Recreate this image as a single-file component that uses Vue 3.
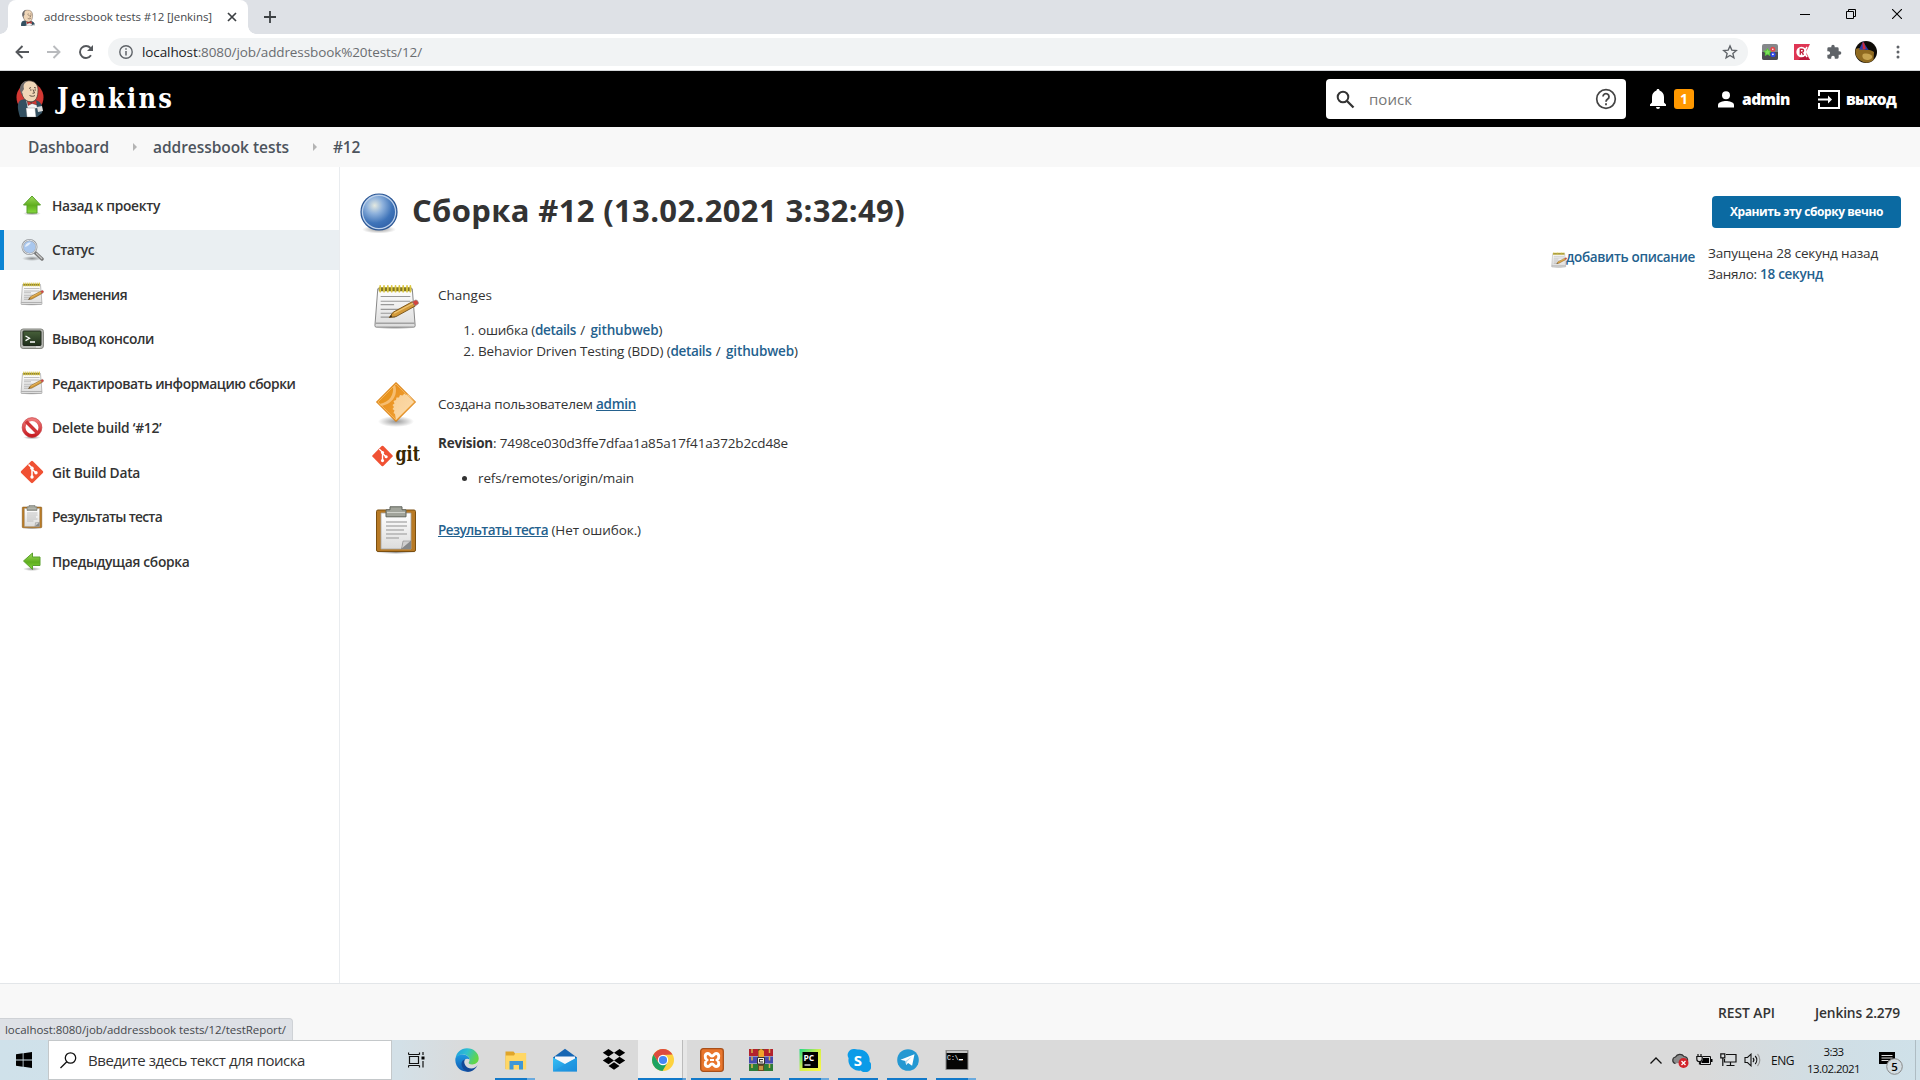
<script setup>
// Tracks a piece of text out to the given width in pixels.
const fit = (el, { value }) => {
  el.style.letterSpacing = '0px'
  const n = el.textContent.length
  el.style.letterSpacing = ((value - el.getBoundingClientRect().width) / n).toFixed(3) + 'px'
}
const vFit = { mounted: fit }

const tasks = [
  { icon: 'up', text: 'Назад к проекту', w: 108 },
  { icon: 'search', text: 'Статус', w: 42, active: true },
  { icon: 'notepad', text: 'Изменения', w: 75 },
  { icon: 'terminal', text: 'Вывод консоли', w: 102 },
  { icon: 'notepad', text: 'Редактировать информацию сборки', w: 243.5 },
  { icon: 'stop', text: 'Delete build ‘#12’', w: 109.5 },
  { icon: 'git', text: 'Git Build Data', w: 88 },
  { icon: 'clipboard', text: 'Результаты теста', w: 110 },
  { icon: 'left', text: 'Предыдущая сборка', w: 137.5 }
]
const commits = [
  { text: 'ошибка (', w: 57 },
  { text: 'Behavior Driven Testing (BDD) (', w: 192.5 }
]
const apps = [
  { icon: 'edge' },
  { icon: 'explorer', run: 'multi' },
  { icon: 'mail' },
  { icon: 'dropbox' },
  { icon: 'chrome', run: 'current' },
  { icon: 'xampp', run: 'one' },
  { icon: 'winrar', run: 'one' },
  { icon: 'pycharm', run: 'multi', label: 'PC' },
  { icon: 'skype', run: 'one', label: 'S' },
  { icon: 'telegram', run: 'one' },
  { icon: 'cmd', run: 'multi', label: 'C:\\_' }
]
</script>

<template>
  <div class="screen">
    <svg class="defs" width="0" height="0" aria-hidden="true">
      <defs>
        <linearGradient id="gGreen" x1="0" y1="0" x2="0" y2="1"><stop offset="0" stop-color="#9fdc5c" /><stop offset=".55" stop-color="#5fae1e" /><stop offset="1" stop-color="#86d93c" /></linearGradient>
        <linearGradient id="gPaper" x1="0" y1="0" x2="0" y2="1"><stop offset="0" stop-color="#fff" /><stop offset="1" stop-color="#dcdcdc" /></linearGradient>
        <radialGradient id="gBall" cx=".38" cy=".32" r=".75"><stop offset="0" stop-color="#e4e9e0" /><stop offset=".3" stop-color="#8fb2dc" /><stop offset=".65" stop-color="#3f74b9" /><stop offset="1" stop-color="#2c5ca4" /></radialGradient>
        <linearGradient id="gOrange" x1="0" y1="0" x2="1" y2="1"><stop offset="0" stop-color="#e58a17" /><stop offset="1" stop-color="#f3a53a" /></linearGradient>
        <linearGradient id="gCog" x1="0" y1="0" x2="1" y2="1"><stop offset="0" stop-color="#f9cf94" /><stop offset="1" stop-color="#fbdcae" /></linearGradient>
        <linearGradient id="gRed" x1="0" y1="0" x2="0" y2="1"><stop offset="0" stop-color="#ee7b7b" /><stop offset="1" stop-color="#c81d22" /></linearGradient>
        <linearGradient id="gTerm" x1="0" y1="0" x2="0" y2="1"><stop offset="0" stop-color="#47603a" /><stop offset="1" stop-color="#1f2f1b" /></linearGradient>
        <linearGradient id="gEdgeA" x1="0" y1="0" x2="1" y2=".4"><stop offset="0" stop-color="#1c9be0" /><stop offset=".5" stop-color="#2fc0d0" /><stop offset="1" stop-color="#62d648" /></linearGradient>
        <linearGradient id="gEdgeB" x1="0" y1="0" x2="0" y2="1"><stop offset="0" stop-color="#1d9ae2" /><stop offset="1" stop-color="#1259b0" /></linearGradient>
        <linearGradient id="gMail" x1="0" y1="0" x2="1" y2="1"><stop offset="0" stop-color="#35c0f5" /><stop offset="1" stop-color="#1a86d8" /></linearGradient>
        <linearGradient id="gPc" x1="0" y1="0" x2="1" y2="1"><stop offset="0" stop-color="#21d789" /><stop offset=".5" stop-color="#d5f04a" /><stop offset="1" stop-color="#fcf84a" /></linearGradient>
        <radialGradient id="gShadow"><stop offset="0" stop-color="#000" stop-opacity=".4" /><stop offset="1" stop-color="#000" stop-opacity="0" /></radialGradient>
      </defs>

      <symbol id="i-up" viewBox="0 0 24 24"><ellipse cx="12" cy="20.500" rx="9" ry="2" fill="url(#gShadow)" /><path d="M12 3l8.500 9H17v8H7v-8H3.500z" fill="url(#gGreen)" stroke="#5aa02c" stroke-linejoin="round" /></symbol>
      <symbol id="i-left" viewBox="0 0 24 24"><ellipse cx="12" cy="20" rx="9" ry="2" fill="url(#gShadow)" /><path d="M3.500 12l9-8v4H20v8.500h-7.500v4z" fill="url(#gGreen)" stroke="#5aa02c" stroke-linejoin="round" /></symbol>
      <symbol id="i-search" viewBox="0 0 24 24"><ellipse cx="12" cy="20.500" rx="10" ry="2.500" fill="url(#gShadow)" /><path d="M15 14.500l7 6.500" stroke="#777" stroke-width="3.400" stroke-linecap="round" /><path d="M16.500 15.500l5.200 5" stroke="#c9c9c9" stroke-width="1.200" stroke-linecap="round" /><circle cx="9.500" cy="9" r="7" fill="#a9c7ee" stroke="#979a9e" stroke-width="2" /><circle cx="9.500" cy="9" r="6.800" fill="none" stroke="#dfe2e6" /><path d="M5 9a5 5 0 0 1 6-4.500C9.500 7 8 8 5 9z" fill="#e4eefb" /></symbol>
      <symbol id="i-notepad" viewBox="0 0 48 48"><ellipse cx="23" cy="45" rx="22" ry="2.500" fill="url(#gShadow)" /><path d="M5 5h36l3 38.500a1.500 1.500 0 0 1-1.500 1.500h-39A1.500 1.500 0 0 1 2 43.500z" fill="url(#gPaper)" stroke="#838383" /><path d="M2.500 41h41" stroke="#a2a2a2" stroke-width="1.500" /><path d="M6 3.500h34v4H6z" fill="#7f7426" /><path d="M7.500 2v6M11.500 2v6M15.500 2v6M19.500 2v6M23.500 2v6M27.500 2v6M31.500 2v6M35.500 2v6M39 2v6" stroke="#dcc840" stroke-width="1.800" stroke-linecap="round" /><path d="M8 13h31M8 18h31M8 21.500h14M8 26.500h25M8 30.500h18M8 34.500h15" stroke="#999" stroke-width="1.200" /><path d="M17 35l4-5.500L41 18.500l3 4.500-20 11z" fill="#d39a3a" stroke="#7a5518" /><path d="M22 30.500L42 20" stroke="#f0c877" stroke-width="1.200" /><path d="M41 18.500l3.500-1.800c2 0 3.500 2.500 2.800 4L44 23z" fill="#d4453d" stroke="#8c8c8c" stroke-width=".7" /><path d="M17 35l2-2.600 1 1.500z" fill="#222" /></symbol>
      <symbol id="i-terminal" viewBox="0 0 24 24"><rect x=".6" y="2" width="22.800" height="19.500" rx="2.500" fill="#b9bbb6" stroke="#83857f" /><rect x="3" y="4" width="18" height="14.500" rx=".8" fill="url(#gTerm)" stroke="#20281d" /><path d="M5.500 9l4 2.300-4 2.300M10 15h5" fill="none" stroke="#fff" stroke-width="1.300" /><path d="M16 20h4" stroke="#eee" /></symbol>
      <symbol id="i-stop" viewBox="0 0 24 24"><ellipse cx="12" cy="21.500" rx="9" ry="1.800" fill="url(#gShadow)" /><circle cx="12" cy="11.500" r="8.200" fill="#fff" stroke="url(#gRed)" stroke-width="3.400" /><path d="M6 5.500l12 12" stroke="#cf3437" stroke-width="3.400" /><circle cx="12" cy="11.500" r="9.900" fill="none" stroke="#c03338" stroke-width=".6" /></symbol>
      <symbol id="i-git" viewBox="0 0 24 24"><rect x="3.700" y="3.700" width="16.600" height="16.600" rx="1.300" transform="rotate(45 12 12)" fill="#f05133" /><path d="M8.500 4.500L12 8v9.500M12 9l4 4" fill="none" stroke="#fff" stroke-width="1.500" /><circle cx="12" cy="8.200" r="1.700" fill="#fff" /><circle cx="12" cy="17" r="1.700" fill="#fff" /><circle cx="16" cy="12.800" r="1.700" fill="#fff" /></symbol>
      <symbol id="i-clipboard" viewBox="0 0 48 48"><ellipse cx="24" cy="46.500" rx="20" ry="1.500" fill="url(#gShadow)" /><rect x="4.500" y="4" width="39" height="41.500" rx="1.500" fill="#b87a25" stroke="#7b4f10" /><path d="M9 7h30v36H9z" fill="url(#gPaper)" stroke="#a5a5a5" stroke-width=".8" /><path d="M39 35v8H29.500l1.500-7z" fill="#85888a" /><path d="M31 35h8l-9.500 8z" fill="#cfcfcf" stroke="#777" stroke-width=".5" /><path d="M18 .8h12v3h4v7H14v-7h4z" fill="#a1a49b" stroke="#60645c" /><path d="M15 6.500h18" stroke="#d0d2cb" /><path d="M14 16h21M14 20h21M14 24h18M14 28h21M14 32h13" stroke="#b3b3b3" stroke-width="1.600" /></symbol>
      <symbol id="i-ball" viewBox="0 0 40 42"><ellipse cx="20" cy="37.500" rx="17" ry="4" fill="url(#gShadow)" /><circle cx="20" cy="20" r="18" fill="url(#gBall)" stroke="#2d5794" stroke-width="1.200" /><circle cx="20" cy="20" r="16.600" fill="none" stroke="#bdd1ea" stroke-width="1.200" /></symbol>
      <symbol id="i-user" viewBox="0 0 48 48"><ellipse cx="24" cy="41.500" rx="18" ry="5.500" fill="url(#gShadow)" /><path d="M24 2.500L43.500 22 24 41.500 4.500 22z" fill="url(#gOrange)" stroke="#d77b0b" stroke-linejoin="round" /><path d="M23 5c3 8-1 19-14 21L5.500 22z" fill="#f6bd70" /><path d="M21 6.500c1 8-3 15.500-13.500 17.500L5.500 22z" fill="#e8941e" /><path d="M36 14.500l-2 .5-1.500-1.500-2 2-2.500-.5-1 2.500-2.500 0-.5 2.500-2.500 1 1 2.500-2 1.500 1.500 2-1.500 2 2 1.500-1 2.500 1.500 1 .5 3L24 40l18.500-18z" fill="url(#gCog)" /><path d="M24 4L42 22 24 40 6 22z" fill="none" stroke="#f8bb63" stroke-width=".8" /></symbol>

      <symbol id="i-butler" viewBox="0 0 28 38"><path d="M4 37C1 28 1 22 5 20l8-2 9 3c4 2 5 7 4 12l-5 4z" fill="#335061" /><path d="M10 19l5 5 5-4 1 8-9 2z" fill="#f3f3f3" /><path d="M11 20l4 2.500 5-2.500 1 5-5-1.500-4 2z" fill="#d33833" stroke="#222" stroke-width=".4" /><path d="M5 10C4 4 8 .8 13 .8c6 0 9 4 9 9 0 7-2 12-7 12-6 0-9-5-10-12z" fill="#f0d6b7" stroke="#463b35" stroke-width=".7" /><path d="M5 13C2 7 6 1 12 1 8 3 7 5 8 9l-2 3 1 4z" fill="#6d6b6d" /><path d="M13 8.500l2-1M18 7.500l2 .5M14 10h1.500M18.500 10H20M17 9.500l1.500 3.500-2 .3M13.500 15.500c2 1 4 1 5.500 0" fill="none" stroke="#3b2c25" stroke-width=".8" /><path d="M10 28l9 0 1 9h-9z" fill="#fff" stroke="#555" stroke-width=".3" /><path d="M21 27l5-1 1 5-5 1z" fill="#ddd" /></symbol>

      <symbol id="i-edge" viewBox="0 0 24 24"><path d="M.5 11C1 4.500 6 .3 12 .3c7 0 11.700 5 11.700 10 0 4-3 6.200-6.500 6.200-3 0-4-1.200-3.400-2.200.7-1.200.8-2 .8-2.800C14.400 8 11 6.500 8 6.500 4.500 6.500 1.500 8.500.5 11z" fill="url(#gEdgeA)" /><path d="M.3 12C.3 8.500 4 6.300 8 6.500c3.500.2 6.500 2.500 6.600 5-3-2-6 0-6 3.500 0 4.500 5 8.500 9 7.600C12 25.500.5 23 .3 12z" fill="url(#gEdgeB)" /><path d="M9.800 11.500c-2 4 1.500 9 6.500 9 3 0 5-1.500 6.200-3.200-2 4-5.500 6.300-9 6.400-4-.5-7.500-5-7-8.500.3-1.800 1.600-3.200 3.300-3.700z" fill="#134a98" /></symbol>
      <symbol id="i-explorer" viewBox="0 0 24 24"><path d="M1.500 3.500h8l2 2.500H22v15H1.500z" fill="#e0a52a" /><path d="M1.500 7.500H10l1.500-2.500h10.700v16.500H1.500z" fill="#ffd765" /><path d="M5.500 13h13.500v8.500h-4V17H9.500v4.500h-4z" fill="#3f97d6" /></symbol>
      <symbol id="i-mail" viewBox="0 0 24 24"><path d="M0 9.500L12 .8l12 8.700v3H0z" fill="#1565b3" /><path d="M2 8.500h20V16H2z" fill="#f5f7fa" /><path d="M0 9.500l12 6.500 12-6.500v14H0z" fill="url(#gMail)" /><path d="M0 23.500l14-8.500L24 9.500v14z" fill="#1c93e0" opacity=".5" /></symbol>
      <symbol id="i-dropbox" viewBox="0 0 24 24"><path d="M6.500 1l5.500 3.700-5.500 3.700L.8 4.700zM17.500 1l5.700 3.700-5.700 3.700L12 4.700zM6.500 8.800L12 12.500l-5.500 3.700-5.700-3.700zM17.500 8.800l5.700 3.700-5.700 3.700-5.500-3.700zM12 14.200l5.500 3.700-5.500 3.800-5.500-3.800z" /></symbol>
      <symbol id="i-chrome" viewBox="0 0 24 24"><circle cx="12" cy="12" r="11" fill="#fdd23f" /><path d="M2.500 6.500A11 11 0 0 1 21.500 6.500L12 7l-5 7z" fill="#dd4b3e" /><path d="M2.500 6.500A11 11 0 0 0 11.500 23l5-8.500L12 16l-5-2z" fill="#1da362" /><circle cx="12" cy="12" r="5.200" fill="#fff" /><circle cx="12" cy="12" r="4.100" fill="#4687f4" /></symbol>
      <symbol id="i-xampp" viewBox="0 0 24 24"><rect x=".7" y=".7" width="22.600" height="22.600" rx="2.500" fill="#e8762d" stroke="#a94f18" stroke-width="1.300" /><path d="M8 5.500c-3.500 0-3.500 4.500-1.200 6.500-2.300 2-2.300 6.500 1.200 6.500 2 0 1.800-2.500 4-2.500s2 2.500 4 2.500c3.500 0 3.500-4.500 1.200-6.500 2.300-2 2.300-6.500-1.200-6.500-2 0-1.800 2.500-4 2.500s-2-2.500-4-2.500z" fill="none" stroke="#fff" stroke-width="2.900" /><path d="M10 12h4" stroke="#fff" stroke-width="2" /></symbol>
      <symbol id="i-winrar" viewBox="0 0 24 24"><path d="M0 1h24v7H0z" fill="#b3222d" /><path d="M0 8.500h24v7H0z" fill="#454bb0" /><path d="M0 16h24v7H0z" fill="#2c7c38" /><path d="M3 1v22M20.500 1v22" stroke="#d7b24c" stroke-width="1.500" stroke-dasharray="4 3.500" /><path d="M9 1h6v22H9z" fill="#6b4a22" /><path d="M9.500 3L12 .8 15 3v6H9.500z" fill="#f0a52c" /><path d="M8.500 9.500h7V16h-7z" fill="#f3ede0" stroke="#333" /><path d="M10.500 11.500h3.500M10.500 14h3.500M10.500 11v3" stroke="#333" /><path d="M10 18h4v4h-4z" fill="#c89344" /></symbol>
      <symbol id="i-pycharm" viewBox="0 0 24 24"><rect x="1.500" y="1" width="21.500" height="22" fill="url(#gPc)" /><rect x="4.500" y="4" width="15.500" height="16" /><path d="M6.500 17h6" stroke="#fff" stroke-width="1.200" /></symbol>
      <symbol id="i-skype" viewBox="0 0 24 24"><path d="M7 1a6 6 0 0 1 3.500.6 10.500 10.500 0 0 1 12 12A6 6 0 0 1 13.800 22.500 10.500 10.500 0 0 1 1.600 10.200 6 6 0 0 1 7 1z" fill="#0b9be8" /></symbol>
      <symbol id="i-telegram" viewBox="0 0 24 24"><circle cx="12" cy="12" r="10.800" fill="#2498d2" /><path d="M4.500 11.800L18.500 6.300l-2.400 11.500-4-2.800-2 2-.6-4z" fill="#fff" /><path d="M9.500 13l6.500-4.600-5 5.300-.9 3.300z" fill="#b6d9ea" /></symbol>
      <symbol id="i-cmd" viewBox="0 0 24 24"><rect x="1" y="2.500" width="22" height="19" fill="#050505" stroke="#8a8a8a" /><path d="M1.500 4h21" stroke="#d8d8d8" stroke-width="1.800" /><path d="M14 11.500h4" stroke="#fff" /></symbol>
    </svg>

    <!-- Browser -->
    <header class="tabs">
      <div class="tab">
        <svg class="favicon" viewBox="0 0 28 28" width="16" height="17"><use href="#i-butler" width="28" height="38" /></svg>
        <span v-fit="168" class="tab-title">addressbook tests #12 [Jenkins]</span>
        <svg class="tab-close" width="10" height="10" viewBox="0 0 10 10"><path d="M1 1l8 8M9 1L1 9" stroke="#3c4043" stroke-width="1.700" /></svg>
      </div>
      <svg class="new-tab" width="12" height="12" viewBox="0 0 12 12"><path d="M6 0v12M0 6h12" stroke="#3c4043" stroke-width="1.800" /></svg>
      <div class="win">
        <svg width="10" height="10" viewBox="0 0 10 10"><path d="M0 5.500h10" stroke="#000" /></svg>
        <svg width="10" height="10" viewBox="0 0 10 10"><path d="M.5 2.500h7v7h-7zM2.500 2.500v-2h7v7h-2" fill="none" stroke="#000" /></svg>
        <svg width="10" height="10" viewBox="0 0 10 10"><path d="M0 0l10 10M10 0L0 10" stroke="#000" stroke-width="1.100" /></svg>
      </div>
    </header>
    <div class="toolbar">
      <div class="nav">
        <svg width="14" height="14" viewBox="0 0 14 14"><path d="M14 7H1.500M7.500 1L1.500 7l6 6" fill="none" stroke="#55585c" stroke-width="1.900" /></svg>
        <svg width="14" height="14" viewBox="0 0 14 14"><path d="M0 7h12.500M6.500 1l6 6-6 6" fill="none" stroke="#b9bbbe" stroke-width="1.900" /></svg>
        <svg width="14" height="14" viewBox="0 0 14 14"><path d="M12 10.300A6 6 0 1 1 11.500 3" fill="none" stroke="#55585c" stroke-width="1.900" /><path d="M14 0v6H8z" fill="#55585c" /></svg>
      </div>
      <div class="omnibox">
        <svg width="14" height="14" viewBox="0 0 14 14"><circle cx="7" cy="7" r="6.200" fill="none" stroke="#5f6368" stroke-width="1.400" /><path d="M7 6v4.500M7 3.300v1.500" stroke="#5f6368" stroke-width="1.500" /></svg>
        <span v-fit="280" class="url"><b>localhost</b>:8080/job/addressbook%20tests/12/</span>
        <svg class="star" width="16" height="16" viewBox="0 0 24 24"><path d="M12 2.800l2.700 6.300 6.800.6-5.200 4.500 1.600 6.700L12 17.300l-5.900 3.600 1.600-6.700-5.200-4.500 6.800-.6z" fill="none" stroke="#5f6368" stroke-width="2" /></svg>
      </div>
      <div class="exts">
        <svg width="16" height="16" viewBox="0 0 16 16"><rect width="16" height="16" rx="2" fill="#85888b" /><path d="M0 8h16v6a2 2 0 0 1-2 2H2a2 2 0 0 1-2-2z" fill="#4a4c50" /><path d="M5.500 4.500l1.200 2.300 2.500.4-1.800 1.700.4 2.500-2.300-1.200-2.300 1.200.4-2.500-1.800-1.700 2.500-.4z" fill="#7be05a" stroke="#58c83c" /><circle cx="10.800" cy="5.200" r="2.500" fill="#e2484a" /><circle cx="11" cy="10.500" r="2.600" fill="#2f49e8" /><circle cx="10.900" cy="10.300" r=".9" fill="#fff" /><circle cx="10.800" cy="5.300" r=".8" fill="#fff" /></svg>
        <svg width="16" height="16" viewBox="0 0 16 16"><path d="M0 0h16l-4 8 4 8H0z" fill="#df3654" /><path d="M11 10l5 6H4z" fill="#b8183a" /><circle cx="7.500" cy="8" r="5.200" fill="#fff" /><path d="M13 3l-3 5 3 5" fill="none" stroke="#fff" stroke-width="1.500" /><path d="M6.300 10.800V5.300h1.800a1.300 1.300 0 0 1 0 2.900H6.300M7.900 8.200l1.500 2.600" fill="none" stroke="#c01f3c" stroke-width="1.400" /></svg>
        <svg width="16" height="16" viewBox="0 0 24 24"><path d="M20.500 11H19V7a2 2 0 0 0-2-2h-4V3.500a2.500 2.500 0 0 0-5 0V5H4a2 2 0 0 0-2 2v3.800h1.500a2.700 2.700 0 0 1 0 5.400H2V20a2 2 0 0 0 2 2h3.800v-1.500a2.700 2.700 0 0 1 5.400 0V22H17a2 2 0 0 0 2-2v-4h1.500a2.500 2.500 0 0 0 0-5z" fill="#5f6368" /></svg>
        <svg width="22" height="22" viewBox="0 0 22 22"><circle cx="11" cy="11" r="11" fill="#0e0b07" /><path d="M.8 8C4 6 8 7 11 8.500c3 0 6 1 8 2.500l-.5 8A11 11 0 0 1 .8 8z" fill="#8f6a20" /><path d="M8 13c4-1 8 0 9 2s-2 4-5 4-6-3-4-6z" fill="#c6a350" /><path d="M4 8.500L8 .5l5.500 8.500z" fill="#2d3ba8" /><path d="M7.500 1.500l1.500 0 1.800 6.500-3 .5z" fill="#cf2b38" /></svg>
        <svg width="4" height="14" viewBox="0 0 4 14"><circle cx="2" cy="2" r="1.500" fill="#5f6368" /><circle cx="2" cy="7" r="1.500" fill="#5f6368" /><circle cx="2" cy="12" r="1.500" fill="#5f6368" /></svg>
      </div>
    </div>

    <!-- Jenkins -->
    <div class="jhead">
      <a class="brand">
        <svg width="28" height="40" viewBox="0 0 28 40"><ellipse cx="14" cy="18.500" rx="13.500" ry="14.500" fill="#d33833" /><use href="#i-butler" width="28" height="38" y="1" /></svg>
        <span v-fit="117">Jenkins</span>
      </a>
      <div class="find">
        <svg width="19" height="19" viewBox="0 0 19 19"><circle cx="7" cy="7" r="5.300" fill="none" stroke="#333" stroke-width="2" /><path d="M11 11l6.500 6.500" stroke="#333" stroke-width="2.300" /></svg>
        <span v-fit="43" class="ph">поиск</span>
        <svg class="help" width="22" height="22" viewBox="0 0 22 22"><circle cx="11" cy="11" r="9.300" fill="none" stroke="#444" stroke-width="1.700" /><path d="M8 8.600a3 3 0 1 1 4.700 2.500c-1.200.8-1.700 1.300-1.700 2.700M11 15.300v2" fill="none" stroke="#444" stroke-width="1.800" /></svg>
      </div>
      <svg class="bell" width="18" height="20" viewBox="0 0 18 20"><path d="M9 0c1 0 1.500.7 1.500 1.600C13.300 2.400 15 5 15 8v5.500l2 2V17H1v-1.500l2-2V8c0-3 1.700-5.600 4.500-6.400C7.500.7 8 0 9 0zM7 18h4a2 2 0 0 1-4 0z" fill="#fff" /></svg>
      <span class="badge">1</span>
      <svg class="person" width="16" height="17" viewBox="0 0 16 17"><circle cx="8" cy="4.300" r="4" fill="#fff" /><path d="M0 16.500V14c0-3 5-4 8-4s8 1 8 4v2.500z" fill="#fff" /></svg>
      <b v-fit="48" class="who">admin</b>
      <svg class="exit" width="22" height="19" viewBox="0 0 22 19"><path d="M1 6V1h20v17H1v-5" fill="none" stroke="#fff" stroke-width="2" /><path d="M0 9.500h12" stroke="#fff" stroke-width="2" /><path d="M10 5.500l4 4-4 4z" fill="#fff" /></svg>
      <b v-fit="50" class="out">выход</b>
    </div>
    <nav class="crumbs">
      <span v-fit="81">Dashboard</span><i></i><span v-fit="136">addressbook tests</span><i></i><span v-fit="27">#12</span>
    </nav>

    <div class="body">
      <aside>
        <a v-for="(t, k) in tasks" :key="k" class="task" :class="{ active: t.active }">
          <svg width="24" height="24"><use :href="'#i-' + t.icon" width="24" height="24" /></svg>
          <span v-fit="t.w">{{ t.text }}</span>
        </a>
      </aside>
      <main>
        <div class="title">
          <svg width="40" height="42"><use href="#i-ball" width="40" height="42" /></svg>
          <h1 v-fit="493">Сборка #12 (13.02.2021 3:32:49)</h1>
        </div>
        <div class="cols">
          <section>
            <div class="row changes">
              <svg width="48" height="48"><use href="#i-notepad" width="46" height="48" x="1" /></svg>
              <div>
                <span v-fit="54">Changes</span>
                <ol>
                  <li v-for="c in commits" :key="c.text">
                    <span v-fit="c.w" class="pre">{{ c.text }}</span><a v-fit="41">details</a><span v-fit="14.5" class="pre">{{ ' / ' }}</span><a v-fit="68">githubweb</a><span>)</span>
                  </li>
                </ol>
              </div>
            </div>
            <div class="row user">
              <svg width="48" height="48"><use href="#i-user" width="48" height="48" /></svg>
              <div><span v-fit="158" class="pre">Создана пользователем </span><a v-fit="40" class="u">admin</a></div>
            </div>
            <div class="row rev">
              <svg width="48" height="24" viewBox="0 0 48 24"><use href="#i-git" width="22" height="22" x="-.5" y="1" /><text x="23.500" y="17" textLength="24.500" lengthAdjust="spacingAndGlyphs" class="gitword">git</text></svg>
              <div>
                <b v-fit="55">Revision</b><span v-fit="295" class="pre">: 7498ce030d3ffe7dfaa1a85a17f41a372b2cd48e</span>
                <ul><li><span v-fit="156">refs/remotes/origin/main</span></li></ul>
              </div>
            </div>
            <div class="row test">
              <svg width="48" height="48"><use href="#i-clipboard" width="48" height="48" /></svg>
              <div><a v-fit="110" class="u">Результаты теста</a><span v-fit="93" class="pre"> (Нет ошибок.)</span></div>
            </div>
          </section>
          <div class="meta">
            <button><span v-fit="153">Хранить эту сборку вечно</span></button>
            <div class="info">
              <div class="desc"><svg width="16" height="16"><use href="#i-notepad" width="16" height="16" /></svg><a v-fit="129">добавить описание</a></div>
              <div class="when">
                <div><span v-fit="170">Запущена 28 секунд назад</span></div>
                <div><span v-fit="52" class="pre">Заняло: </span><a v-fit="63">18 секунд</a></div>
              </div>
            </div>
          </div>
        </div>
      </main>
    </div>

    <footer>
      <span v-fit="57">REST API</span><span v-fit="85">Jenkins 2.279</span>
      <div class="status"><span v-fit="281">localhost:8080/job/addressbook tests/12/testReport/</span></div>
    </footer>

    <!-- Windows taskbar -->
    <div class="taskbar">
      <div class="start"><svg width="16" height="16" viewBox="0 0 16 16"><path d="M0 2.200L6.700 1.300v6.300H0zM7.500 1.200L16 0v7.600H7.500zM0 8.400h6.700v6.300L0 13.800zM7.500 8.400H16V16l-8.500-1.200z" /></svg></div>
      <div class="wsearch">
        <svg width="17" height="17" viewBox="0 0 17 17"><circle cx="10.500" cy="6" r="5.200" fill="none" stroke="#111" stroke-width="1.300" /><path d="M6.800 9.700L.5 16" stroke="#111" stroke-width="1.300" /></svg>
        <span v-fit="217">Введите здесь текст для поиска</span>
      </div>
      <div class="view"><svg width="17" height="16" viewBox="0 0 17 16"><path d="M1.500 4.500h9v7h-9zM.5 2.500V.500M11.500 2.500V.500M.5 2.500h11M.5 15.500v-2M11.500 15.500v-2M.5 13.500h11M15 0v3M15 9v6.500" fill="none" stroke="#111" stroke-width="1.200" /><path d="M13.500 4.500h3v3h-3z" /></svg></div>
      <div v-for="a in apps" :key="a.icon" class="app" :class="a.run">
        <svg width="24" height="24"><use :href="'#i-' + a.icon" width="24" height="24" /></svg>
        <span v-if="a.label" class="label" :class="a.icon">{{ a.label }}</span>
      </div>
      <div class="tray">
        <svg width="12" height="7" viewBox="0 0 12 7"><path d="M.5 6.500L6 1l5.500 5.500" fill="none" stroke="#111" stroke-width="1.300" /></svg>
        <svg width="17" height="15" viewBox="0 0 17 15"><path d="M3.500 10.500a3.300 3.300 0 0 1 0-6.500A5 5 0 0 1 12 3.500c3 .3 4 2 3.500 5" fill="#8a8a8a" stroke="#333" stroke-width="1.200" /><circle cx="11.500" cy="10" r="5" fill="#d2232a" /><path d="M9.500 8l4 4M13.500 8l-4 4" stroke="#fff" stroke-width="1.300" /></svg>
        <svg width="17" height="12" viewBox="0 0 17 12"><path d="M2 0v2.500M5 0v2.500M.8 2.500h5.400V5a2.700 2.700 0 0 1-5.400 0zM3.500 7.500V10H5" fill="none" stroke="#111" stroke-width="1.200" /><path d="M7 2.500h7.500v8h-10V8" fill="none" stroke="#111" /><path d="M7 4h6v5H5.500V8L7 6zM15 5h1.500v3H15z" /></svg>
        <svg width="17" height="14" viewBox="0 0 17 14"><path d="M6 1.500h10v7.500H4.500V6M10.500 9v3.500M6.500 12.500h8M.8.800h4v4h-4zM2.800 5v8" fill="none" stroke="#111" stroke-width="1.200" /></svg>
        <svg width="18" height="14" viewBox="0 0 18 14"><path d="M1 4.500h2.500L7 1.200v11.600L3.500 9.500H1z" fill="none" stroke="#111" stroke-width="1.100" /><path d="M9 5a3 3 0 0 1 0 4M11.200 3a6 6 0 0 1 0 8" fill="none" stroke="#111" stroke-width="1.200" /><path d="M13.500 1a9 9 0 0 1 0 12" fill="none" stroke="#999" stroke-width="1.200" /></svg>
        <span v-fit="23" class="lang">ENG</span>
        <div class="clock"><span v-fit="20">3:33</span><span v-fit="53">13.02.2021</span></div>
        <div class="notes">
          <svg width="24" height="24" viewBox="0 0 24 24"><path d="M0 1h16v12h-4l-4 4v-4H0z" /><path d="M2.500 4.500h11M2.500 7h11M2.500 9.500h7" stroke="#ddd" /><circle cx="15.500" cy="15.500" r="7.800" fill="#d3dde2" stroke="#888" /><text x="15.500" y="19.700" text-anchor="middle" font-family="Open Sans, sans-serif" font-size="11.500" font-weight="600">5</text></svg>
        </div>
      </div>
    </div>
  </div>
</template>

<style>
body {
  margin: 0;
  overflow: hidden;
}
</style>

<style scoped>
.screen {
  width: 1920px;
  height: 1080px;
  display: flex;
  flex-direction: column;
  overflow: hidden;
  background: #fff;
  color: #333;
  font: 13.500px/21px "Open Sans", "Noto Sans", sans-serif;
  white-space: nowrap;
}
.defs { position: absolute; }
svg { flex: none; display: block; }
span, b, h1, main a { display: inline-block; flex: none; }
.pre { white-space: pre; }

.tabs { height: 34px; flex: none; background: #dee1e6; display: flex; align-items: flex-start; font-size: 11.500px; color: #45484c; }
.tab { position: relative; box-sizing: border-box; margin-left: 8px; width: 240px; height: 34px; background: #fff; border-radius: 8px 8px 0 0; display: flex; align-items: center; padding: 0 11px 0 12px; }
.tab::before, .tab::after { content: ""; position: absolute; bottom: 0; width: 8px; height: 8px; background: radial-gradient(circle at 0 0, transparent 7.500px, #fff 8px); }
.tab::before { left: -8px; }
.tab::after { right: -8px; transform: scaleX(-1); }
.tab-title { margin: -1px 0 0 8px; }
.tab-close { margin-left: auto; }
.new-tab { margin: 11px 0 0 16px; }
.win { margin: 9px 18px 0 auto; display: flex; gap: 36px; }

.toolbar { height: 36px; flex: none; display: flex; align-items: center; border-bottom: 1px solid #d4d6d9; }
.nav { display: flex; gap: 18px; padding-left: 15px; width: 93px; }
.omnibox { width: 1640px; height: 28px; box-sizing: border-box; border-radius: 14px; background: #f1f3f4; display: flex; align-items: center; padding: 0 10px 0 11px; }
.url { margin-left: 9px; font-size: 13.500px; color: #6a6d71; }
.url b { display: inline; font-weight: 400; color: #202124; }
.star { margin-left: auto; }
.exts { display: flex; align-items: center; margin-left: 14px; gap: 16px; }
.exts svg:nth-child(4) { margin-left: -3px; }
.exts svg:nth-child(5) { margin-left: 3px; }

.jhead { height: 56px; flex: none; background: #000; color: #fff; display: flex; align-items: center; font-size: 15.500px; font-weight: 700; }
.brand { display: flex; align-items: center; gap: 13px; margin-left: 16px; flex: 1; font: 700 27px/36px "DejaVu Serif Condensed", "DejaVu Serif", serif; }
.brand span { margin-top: -1px; }
.find { width: 300px; height: 40px; box-sizing: border-box; border-radius: 4px; background: #fff; color: #777; font-weight: 400; display: flex; align-items: center; padding: 0 9px 0 10px; }
.ph { margin-left: 14px; font-size: 15px; }
.help { margin-left: auto; }
.bell { margin-left: 23px; }
.badge { margin-left: 7px; width: 20px; height: 20px; border-radius: 3px; background: #ff9800; text-align: center; font-size: 14px; line-height: 20px; }
.person { margin-left: 24px; }
.who { margin-left: 8px; }
.exit { margin-left: 28px; }
.out { margin: 0 24px 0 6px; }

.crumbs { height: 40px; flex: none; background: #f8f8f8; color: #4d545d; display: flex; align-items: center; padding-left: 28px; font-size: 15.500px; font-weight: 650; }
.crumbs i { margin: 0 16px 0 24px; border: 4px solid transparent; border-left-color: #b4b4b4; border-right: 0; }

.body { flex: 1; display: flex; }
aside { width: 339px; border-right: 1px solid #e9ecef; padding-top: 18.200px; }
.task { display: flex; align-items: center; box-sizing: border-box; height: 40px; margin-bottom: 4.500px; padding-left: 20px; gap: 8px; font-size: 13.800px; font-weight: 550; color: #333; }
.active { background: #eaeff2; box-shadow: inset 4px 0 #0b84d4; }

main { flex: 1; color: #333; }
main a { color: #24618e; font-weight: 600; }
.title { display: flex; align-items: center; height: 42px; margin-top: 25px; padding-left: 19px; gap: 12px; }
h1 { margin: -7px 0 0 1px; font-size: 31px; line-height: 40px; font-weight: 700; }
.cols { display: flex; justify-content: space-between; }
section { padding: 50px 0 0 32px; }
.row { display: flex; gap: 18px; }
.u { text-decoration: underline; }
.changes { height: 92px; }
.changes > div, .rev > div { padding-top: 1px; }
.changes > svg { margin-top: -1px; }
ol, ul { margin: 14px 0 0; padding: 0 0 0 40px; }
.user { height: 56px; align-items: center; }
.rev { height: 70px; }
.rev > svg { margin-top: 12px; }
.rev b { font-weight: 700; }
.test { height: 56px; align-items: center; }
.gitword { font: 700 21px "DejaVu Serif", serif; fill: #362701; }
.meta { width: 352px; margin-right: 19px; margin-top: -38px; display: flex; flex-direction: column; align-items: flex-end; }
button { width: 189px; height: 32px; border: 0; padding: 0; border-radius: 4px; background: #0b6aa2; color: #fff; font: 700 12px/20px "Open Sans", sans-serif; }
.info { width: 350px; display: flex; justify-content: space-between; margin-top: 15px; }
.desc { display: flex; align-items: center; height: 28px; }
.desc svg { margin: 5px -1px 0 0; }
.when { width: 193px; }

footer { position: relative; height: 56px; flex: none; border-top: 1px solid #e3e6e9; background: #f8f8f8; display: flex; align-items: center; justify-content: flex-end; gap: 40px; padding-right: 20px; font-weight: 550; font-size: 13.800px; }
footer > span { margin-top: 1px; }
.status { position: absolute; left: 0; bottom: 0; box-sizing: border-box; width: 293px; height: 22px; padding-left: 5px; background: #dee1e6; border: 1px solid #cfd2d6; border-width: 1px 1px 0 0; border-radius: 0 4px 0 0; font-weight: 400; font-size: 11.500px; color: #45484c; }

.taskbar { height: 40px; flex: none; display: flex; align-items: stretch; color: #111; background: linear-gradient(90deg, #cfe1ea 0, #d3e0e7 400px, #dadada 470px, #dadada 1700px, #d0dee5 1830px, #cfe1e9 1920px); }
.start { width: 48px; display: flex; align-items: center; justify-content: center; }
.wsearch { width: 344px; box-sizing: border-box; background: #fff; border: 1px solid #c4c8ca; display: flex; align-items: center; padding-left: 11px; gap: 11px; font-size: 15px; color: #333; }
.view { box-sizing: border-box; width: 50px; padding: 0 2px 1px 0; display: flex; align-items: center; justify-content: center; }
.app { position: relative; width: 49px; display: flex; align-items: center; justify-content: center; }
.one::after, .multi::after, .current::after { content: ""; position: absolute; bottom: 0; left: 4px; width: 40px; height: 2px; background: #1279c9; }
.multi::after { background: linear-gradient(90deg, #1279c9 80%, #6aaade 80%); }
.current::before { content: ""; position: absolute; left: 0; top: 0; width: 44px; height: 40px; background: #efefef; border-right: 1px solid #bbb; box-shadow: 4px 0 #e6e6e6; }
.current svg { position: relative; }
.current::after { left: 0; width: 48px; background: linear-gradient(90deg, #1279c9 44px, #5f9fd6 45px); }
.label { position: absolute; color: #fff; font-weight: 700; }
.pycharm { left: 18.500px; top: 12px; font-size: 8.500px; line-height: 12px; }
.skype { left: 0; width: 48px; top: 10px; text-align: center; font-size: 15px; line-height: 20px; }
.cmd { left: 15px; top: 15px; font: 400 6.500px/8px "Liberation Mono", monospace; }
.tray { margin-left: auto; display: flex; align-items: center; gap: 7px; padding-right: 4px; border-right: 1px solid #aebcc3; margin-right: 4px; font-size: 12px; }
.tray svg:first-child { margin-right: 3px; }
.tray > svg:first-child { margin-left: 1px; }
.lang { margin-left: 2px; }
.clock { display: flex; flex-direction: column; align-items: center; line-height: 17px; margin: -1px 12px 0 6px; font-size: 11.500px; }
.notes { margin: 5px 5px 0 0; }
</style>
